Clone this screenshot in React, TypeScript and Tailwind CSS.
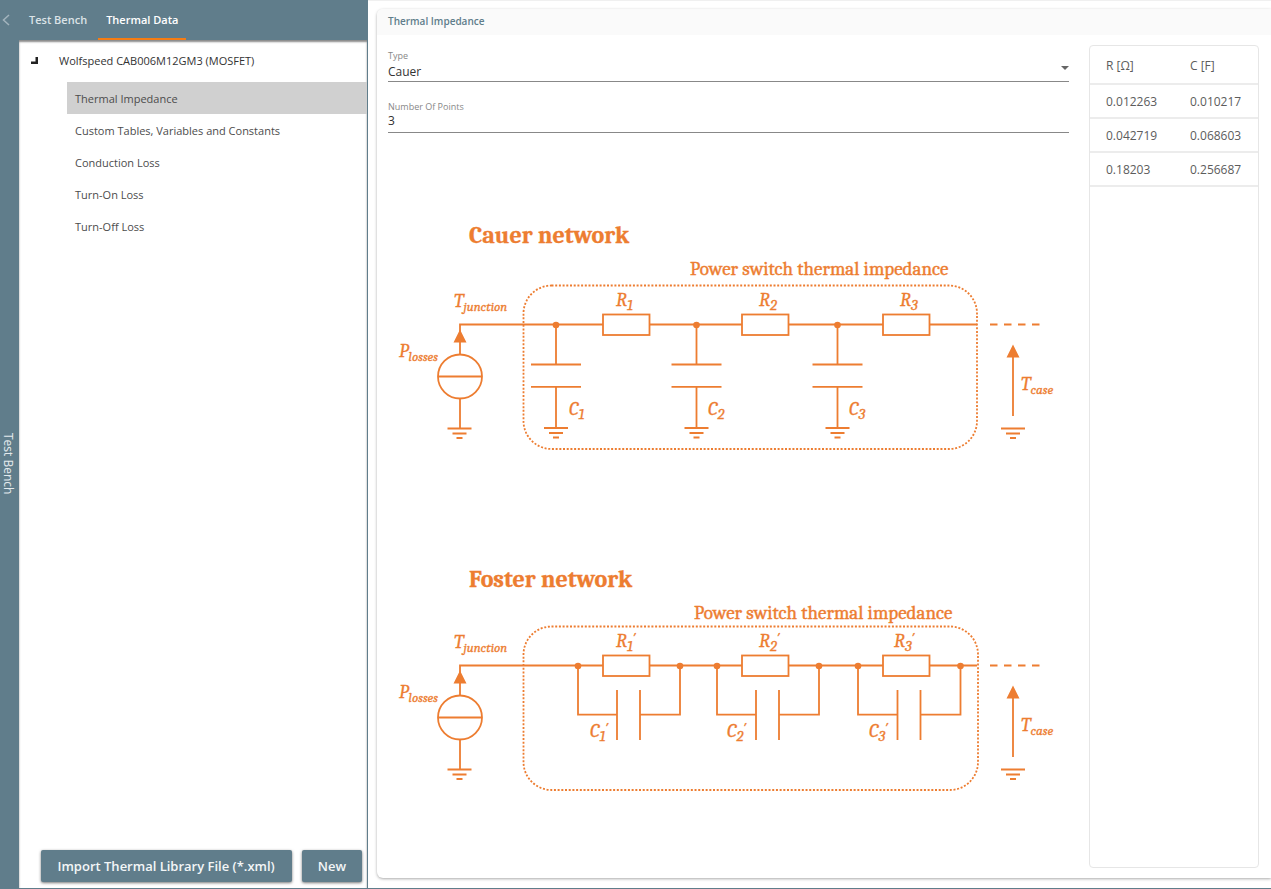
import { useState } from "react";
import type { ReactNode } from "react";

const treeItems = [
  "Thermal Impedance",
  "Custom Tables, Variables and Constants",
  "Conduction Loss",
  "Turn-On Loss",
  "Turn-Off Loss",
];

const points = [
  ["0.012263", "0.010217"],
  ["0.042719", "0.068603"],
  ["0.18203", "0.256687"],
];

const stages = [
  { n: 1, resistor: 603, node: 556, cLabel: 569, rLabel: 616, left: 578, right: 680, plate: 617, fosterC: 590, fosterR: 616 },
  { n: 2, resistor: 742, node: 696.5, cLabel: 708, rLabel: 759, left: 717, right: 819, plate: 756, fosterC: 727, fosterR: 759 },
  { n: 3, resistor: 883, node: 837.5, cLabel: 849, rLabel: 900, left: 858, right: 960.5, plate: 897.5, fosterC: 869, fosterR: 894 },
];

function Ground({ x, y }: { x: number; y: number }) {
  return <path d={`M${x - 12} ${y}h24M${x - 7} ${y + 5}h14M${x - 3} ${y + 9.5}h6`} />;
}

function Symbol({ x, y, name, sub, prime }: { x: number; y: number; name: string; sub: string; prime?: boolean }) {
  return (
    <text x={x} y={y} className="text-[19px] italic" fill="#ed7d31" strokeWidth={0.3}>
      {name}
      <tspan dy={4} className={sub.length > 1 ? "text-[13px]" : "text-[15px]"}>{sub}</tspan>
      {prime && <tspan dy={-8} className="text-[15px]">′</tspan>}
    </text>
  );
}

interface NetworkProps {
  title: string;
  titleY: number;
  subtitleX: number;
  right: number;
  children: ReactNode;
}

function Network({ title, titleY, subtitleX, right, children }: NetworkProps) {
  return (
    <g>
      <text x={469} y={titleY} className="text-[24px] font-bold" fill="#ed7d31" strokeWidth={0.3}>{title}</text>
      <text x={subtitleX} y={titleY + 32} className="text-[19px]" fill="#ed7d31" strokeWidth={0.4}>Power switch thermal impedance</text>
      <rect x={523.5} y={285.5} width={right - 523.5} height={163.5} rx={28} strokeDasharray="2 1.7" />
      <Symbol x={454} y={307} name="T" sub="junction" />
      <Symbol x={399} y={357} name="P" sub="losses" />
      <Symbol x={1021} y={390} name="T" sub="case" />
      <path d="M460 355V324.5H603M649 324.5H742M789 324.5H883M930 324.5H977" />
      <path d="M990 324.5H1040" strokeDasharray="7.5 6.5" />
      <circle cx={460} cy={376.5} r={22} />
      <path d="M438 376.5H482M460 398.5V428M1013 416V350" />
      <path d="M460 329.5L466.5 342.5H453.5ZM1013 344.5L1019.5 357.5H1006.5Z" fill="#ed7d31" stroke="none" />
      <Ground x={459.5} y={428.5} />
      <Ground x={1013} y={428.5} />
      {stages.map((s) => (
        <rect key={s.n} x={s.resistor} y={314.5} width={46.5} height={20.5} />
      ))}
      {children}
    </g>
  );
}

function CauerNetwork() {
  return (
    <Network title="Cauer network" titleY={243} subtitleX={690} right={977}>
      {stages.map((s) => (
        <g key={s.n}>
          <circle cx={s.node} cy={325} r={3.3} fill="#ed7d31" stroke="none" />
          <path d={`M${s.node} 325V364.5M${s.node - 25} 364.5h50M${s.node - 25} 386.8h50M${s.node} 386.8V428`} />
          <Ground x={s.node} y={428} />
          <Symbol x={s.rLabel} y={306} name="R" sub={`${s.n}`} />
          <Symbol x={s.cLabel} y={415} name="C" sub={`${s.n}`} />
        </g>
      ))}
    </Network>
  );
}

function FosterNetwork() {
  return (
    <Network title="Foster network" titleY={246} subtitleX={694} right={978}>
      {stages.map((s) => (
        <g key={s.n}>
          <circle cx={s.left} cy={325} r={3.3} fill="#ed7d31" stroke="none" />
          <circle cx={s.right} cy={325} r={3.3} fill="#ed7d31" stroke="none" />
          <path d={`M${s.left} 325V373.7H${s.plate}M${s.plate} 349v50M${s.plate + 23} 349v50M${s.plate + 23} 373.7H${s.right}V325`} />
          <Symbol x={s.fosterR} y={306} name="R" sub={`${s.n}`} prime />
          <Symbol x={s.fosterC} y={396} name="C" sub={`${s.n}`} prime />
        </g>
      ))}
    </Network>
  );
}

function NetworkDiagrams() {
  return (
    <svg
      viewBox="388 200 681 620"
      className="w-full font-['Cambria','Caladea','Liberation_Serif',serif]"
      fill="none"
      stroke="#ed7d31"
      strokeWidth={1.8}
      role="img"
      aria-label="Cauer and Foster networks"
    >
      <CauerNetwork />
      <g transform="translate(0 341)">
        <FosterNetwork />
      </g>
    </svg>
  );
}

export default function App() {
  const [selected, setSelected] = useState(treeItems[0]);
  const [type, setType] = useState("Cauer");
  const [count, setCount] = useState("3");

  return (
    <div className="flex min-h-screen border-b border-[#607d8b] bg-white font-['Open_Sans',sans-serif] text-[11px] text-[#4c4c4c]">
      <aside className="flex w-[368px] shrink-0 border-r border-[#607d8b] bg-[#607d8b]">
        <div className="flex w-[19px] shrink-0 flex-col items-center">
          <button type="button" aria-label="Collapse panel" className="flex h-[40px] items-center pr-2">
            <svg width="8" height="12" viewBox="0 0 8 12" fill="none" stroke="#a3b4bd" strokeWidth="1.5">
              <path d="M7 1L1.500 6l5.500 5" />
            </svg>
          </button>
          <div className="flex flex-1 items-center">
            <span className="pr-1 text-[12px] text-[#e4eaed] [writing-mode:vertical-rl]">Test Bench</span>
          </div>
        </div>
        <div className="flex min-w-0 flex-1 flex-col">
          <div role="tablist" className="flex h-[40px] shrink-0 font-semibold">
            <button type="button" role="tab" aria-selected={false} className="pr-[11px] pl-[10px] text-[#dbe3e7]">Test Bench</button>
            <button type="button" role="tab" aria-selected className="border-b-2 border-[#f57c13] px-2 pt-[2px] text-white">Thermal Data</button>
          </div>
          <div className="flex flex-1 flex-col bg-white shadow-[inset_0_2px_2px_#8a8a8a]">
            <div className="flex h-[42px] items-center pl-3">
              <svg width="8" height="8" viewBox="0 0 8 8" className="text-[#222]">
                <path d="M7 0v7H0V4.500h4.500V0z" fill="currentColor" />
              </svg>
              <span className="pl-5 font-medium text-[#333]">Wolfspeed CAB006M12GM3 (MOSFET)</span>
            </div>
            <ul className="ml-12">
              {treeItems.map((item) => (
                <li key={item}>
                  <button
                    type="button"
                    onClick={() => setSelected(item)}
                    className={`h-8 w-full px-2 pt-[2px] text-left ${item === selected ? "bg-[#d0d0d0]" : ""}`}
                  >
                    {item}
                  </button>
                </li>
              ))}
            </ul>
            <div className="mt-auto flex justify-end gap-[10px] pr-[5px] pb-[6px] text-[13px] font-semibold text-[#f3f6f7]">
              <button type="button" className="h-8 rounded-xs bg-[#607d8b] px-[17px] pt-[2px] shadow-[0_1px_3px_#777]">Import Thermal Library File (*.xml)</button>
              <button type="button" className="h-8 rounded-xs bg-[#607d8b] px-4 pt-[2px] shadow-[0_1px_3px_#777]">New</button>
            </div>
          </div>
        </div>
      </aside>

      <main className="flex min-w-0 flex-1 flex-col border-t border-[#f0f0f0] pt-2 pb-[10px] pl-[9px]">
        <section className="flex flex-1 flex-col rounded-l-md shadow-[0_1px_3px_#aaa]">
          <h1 className="h-[26px] rounded-tl-md bg-[#fafafa] px-[11px] text-[10px] leading-[25px] font-semibold text-[#607d8b]">Thermal Impedance</h1>
          <div className="flex flex-1 gap-5 pt-[10px] pr-3 pb-[10px] pl-[11px]">
            <div className="min-w-0 flex-1">
              <div className="relative border-b border-[#888] pt-1">
                <label htmlFor="type" className="block text-[9px] leading-[14px] text-[#888]">Type</label>
                <select id="type" value={type} onChange={(e) => setType(e.target.value)} className="block h-[18px] w-full appearance-none bg-transparent pb-[4px] text-[12px] text-[#333] outline-none">
                  <option>Cauer</option>
                  <option>Foster</option>
                </select>
                <svg width="8" height="4" viewBox="0 0 8 4" className="pointer-events-none absolute right-0 bottom-[11px]" fill="#666">
                  <path d="M0 0h8L4 4z" />
                </svg>
              </div>
              <div className="mt-[14px] border-b border-[#888] pt-1">
                <label htmlFor="count" className="block text-[9px] leading-[14px] text-[#888]">Number Of Points</label>
                <input id="count" value={count} onChange={(e) => setCount(e.target.value)} className="block h-[18px] w-full pb-[4px] text-[12px] text-[#333] outline-none" />
              </div>
              <div className="pt-[67px]">
                <NetworkDiagrams />
              </div>
            </div>
            <div className="w-[170px] shrink-0 rounded-sm border border-[#e6e6e6]">
              <table className="w-full table-fixed text-left text-[12px] text-[#5c5c5c]">
                <thead>
                  <tr className="h-[38px] border-b-2 border-[#ececec]">
                    <th className="pt-[2px] pl-4 font-medium">R [Ω]</th>
                    <th className="pt-[2px] pl-4 font-medium">C [F]</th>
                  </tr>
                </thead>
                <tbody>
                  {points.map(([r, c]) => (
                    <tr key={r} className="h-[34px] border-b-2 border-[#ececec]">
                      <td className="pt-[2px] pl-4">{r}</td>
                      <td className="pt-[2px] pl-4">{c}</td>
                    </tr>
                  ))}
                </tbody>
              </table>
            </div>
          </div>
        </section>
      </main>
    </div>
  );
}
